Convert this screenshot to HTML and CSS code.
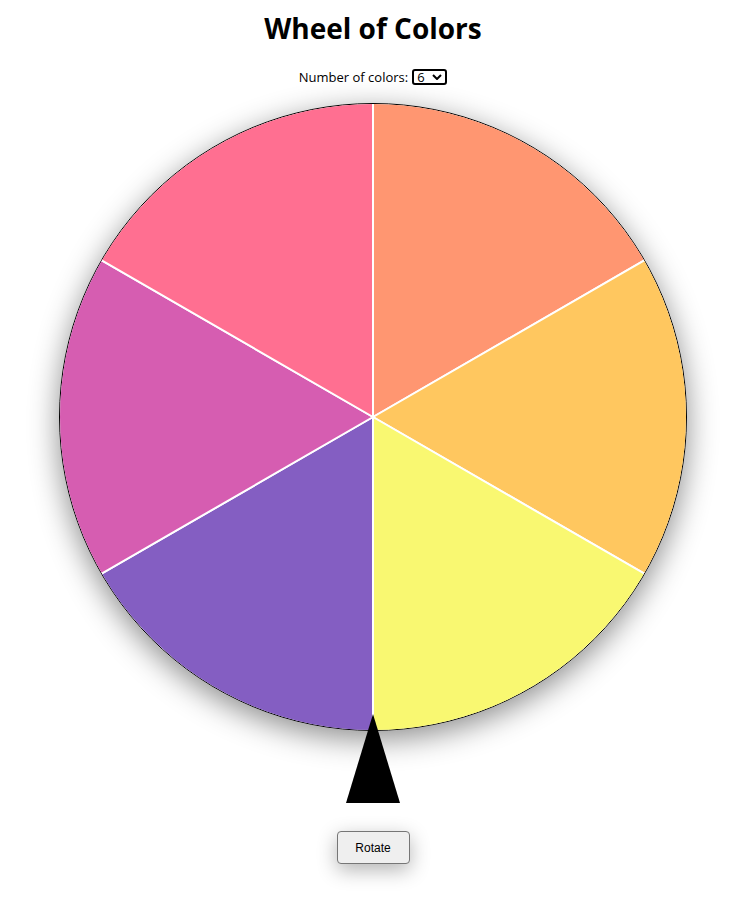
FILE: index.html
```html
<!DOCTYPE html>
<html lang="en">

<head>
  <meta charset="UTF-8" />
  <meta name="viewport" content="width=device-width, initial-scale=1" />
  <title>Wheel of Colors</title>
  <link rel="stylesheet" href="styles.css">
</head>

<body>
  <div class="page">

    <h1>Wheel of Colors</h1>

    <div class="controls">
      <label for="count-select">Number of colors:</label>
      <span class="select-wrap">
        <select id="count-select">
          <option>2</option>
          <option>3</option>
          <option>4</option>
          <option>5</option>
          <option selected>6</option>
        </select>
        <svg class="chevron" viewBox="0 0 10 6" width="10" height="6">
          <path d="M1 1 L5 5 L9 1" fill="none" stroke="#000" stroke-width="2" />
        </svg>
      </span>
    </div>

    <!-- Wheel -->
    <div class="wheel">
      <svg class="wheel-svg" viewBox="-313 -313 626 626" width="626" height="626">
        <g stroke="#fff" stroke-width="2">
          <path d="M0 0 L0 -400 L346.4 -200 Z" fill="#FF9671" />
          <path d="M0 0 L346.4 -200 L346.4 200 Z" fill="#FFC75F" />
          <path d="M0 0 L346.4 200 L0 400 Z" fill="#F9F871" />
          <path d="M0 0 L0 400 L-346.4 200 Z" fill="#845EC2" />
          <path d="M0 0 L-346.4 200 L-346.4 -200 Z" fill="#D65DB1" />
          <path d="M0 0 L-346.4 -200 L0 -400 Z" fill="#FF6F91" />
        </g>
      </svg>
    </div>

    <div class="pointer"></div>

    <button class="rotate-btn">Rotate</button>

  </div>
</body>

</html>
```

FILE: styles.css
```css
* {
  box-sizing: border-box;
}

body {
  margin: 0;
  background: #fff;
  color: #000;
  font-family: 'Open Sans', 'Noto Sans', sans-serif;
}

.page {
  width: 746px;
  padding-bottom: 44px;
  display: flex;
  flex-direction: column;
  align-items: center;
}

h1 {
  font-size: 28px;
  font-weight: 700;
  margin: 9px 0 0;
  line-height: 38px;
}

.controls {
  margin-top: 21px;
  font-size: 13px;
  line-height: 18px;
  display: flex;
  align-items: center;
  gap: 4px;
}

.select-wrap {
  position: relative;
  display: inline-block;
  height: 16px;
}

.select-wrap select {
  appearance: none;
  -webkit-appearance: none;
  display: block;
  font-family: 'Open Sans', sans-serif;
  font-size: 13px;
  line-height: 12px;
  height: 16px;
  width: 35px;
  padding: 0 0 0 3px;
  border: 2px solid #000;
  border-radius: 3px;
  background: #fff;
  color: #000;
}

.chevron {
  position: absolute;
  right: 5px;
  top: 5px;
  pointer-events: none;
}

.wheel {
  margin-top: 17px;
  width: 628px;
  height: 628px;
  border-radius: 50%;
  border: 1px solid #000;
  overflow: hidden;
  box-shadow: 0 8px 30px rgba(0, 0, 0, 0.45);
}

.wheel-svg {
  display: block;
}

.pointer {
  width: 0;
  height: 0;
  margin-top: -17px;
  border-left: 27px solid transparent;
  border-right: 27px solid transparent;
  border-bottom: 89px solid #000;
}

.rotate-btn {
  margin-top: 28px;
  width: 73px;
  height: 33px;
  font-family: 'Liberation Sans', Arial, sans-serif;
  font-size: 12px;
  color: #000;
  background: #efefef;
  border: 1px solid #767676;
  border-radius: 4px;
  box-shadow: 0 6px 20px rgba(0, 0, 0, 0.3);
  cursor: pointer;
}
```
